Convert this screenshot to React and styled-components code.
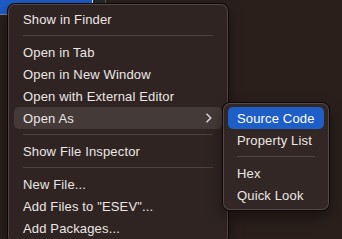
import styled, { createGlobalStyle } from 'styled-components';

const GlobalStyle = createGlobalStyle`
  html, body {
    margin: 0;
    padding: 0;
    background: #2a1f1b;
    font-family: "Liberation Sans", Arial, sans-serif;
    -webkit-font-smoothing: antialiased;
  }
`;

const Screen = styled.div`
  position: relative;
  width: 342px;
  height: 239px;
  overflow: hidden;
  background: #2a1f1b;
`;

const TopStrip = styled.div`
  display: flex;
  height: 15px;
`;

const SelectedItem = styled.div`
  width: 92px;
  height: 14px;
  background: #1d5bc5;
  border-bottom: 1px solid #6f87b3;
  border-right: 1px solid #d8dfea;
`;

const Gutter = styled.div`
  width: 12px;
  background: #27262a;
  border-right: 1px solid #5b5756;
`;

const Menu = styled.div`
  position: absolute;
  left: ${p => p.$left}px;
  top: ${p => p.$top}px;
  width: ${p => p.$width}px;
  box-sizing: border-box;
  padding: 3px ${p => p.$padX}px;
  background: ${p => p.$bg};
  border: 1px solid rgba(255, 255, 255, 0.16);
  border-radius: 7px;
  box-shadow: 0 0 0 1px #0d0908, 0 6px 16px rgba(0, 0, 0, 0.45);
  display: flex;
  flex-direction: column;
`;

const Item = styled.div`
  position: relative;
  height: 22px;
  display: flex;
  align-items: center;
  justify-content: space-between;
  padding: 0 9px;
  border-radius: 5px;
  font-size: 13px;
  letter-spacing: 0.15px;
  white-space: nowrap;
  background: ${p => (p.$active ? '#1e5ec7' : p.$hover ? 'rgba(255,255,255,0.1)' : 'transparent')};
  color: ${p => (p.$active ? '#ffffff' : '#ebe7e5')};
`;

const Separator = styled.div`
  height: 11px;
  display: flex;
  align-items: center;
  padding: 0 9px;
  &::after {
    content: '';
    flex: 1;
    height: 1px;
    background: rgba(255, 255, 255, 0.14);
  }
`;

const Chevron = () => (
  <svg width="8" height="10" viewBox="0 0 8 10" fill="none">
    <path d="M2 1.2 L5.8 5 L2 8.8" stroke="#dcd7d5" strokeWidth="1.6" strokeLinecap="round" strokeLinejoin="round" />
  </svg>
);

const SubMenuSlot = styled.div`
  position: absolute;
  left: calc(100% + 1px);
  top: -4px;
`;

export default function App() {
  return (
    <>
      <GlobalStyle />
      <Screen>
        <TopStrip>
          <SelectedItem />
          <Gutter />
        </TopStrip>

        <Menu $left={8} $top={4} $width={220} $padX={5} $bg="#2f2422">
          <Item>Show in Finder</Item>
          <Separator />
          <Item>Open in Tab</Item>
          <Item>Open in New Window</Item>
          <Item>Open with External Editor</Item>
          <Item $hover>
            Open As
            <Chevron />
            <SubMenuSlot>
              <Menu $left={0} $top={0} $width={106} $padX={4} $bg="#322725">
                <Item $active>Source Code</Item>
                <Item>Property List</Item>
                <Separator />
                <Item>Hex</Item>
                <Item>Quick Look</Item>
              </Menu>
            </SubMenuSlot>
          </Item>
          <Separator />
          <Item>Show File Inspector</Item>
          <Separator />
          <Item>New File...</Item>
          <Item>Add Files to "ESEV"...</Item>
          <Item>Add Packages...</Item>
        </Menu>
      </Screen>
    </>
  );
}
